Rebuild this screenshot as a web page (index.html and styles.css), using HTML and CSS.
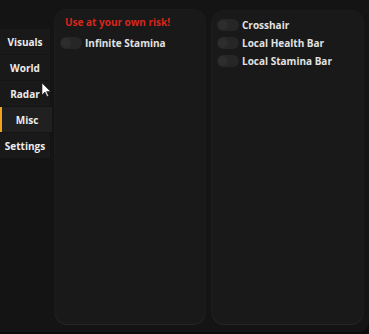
FILE: index.html
```html
<!DOCTYPE html>
<html>
<head>
<meta charset="utf-8">
<link rel="stylesheet" href="styles.css">
</head>
<body>
<div class="window">
  <nav class="sidebar">
    <div class="tab">Visuals</div>
    <div class="tab">World</div>
    <div class="tab">Radar</div>
    <div class="tab active">Misc</div>
    <div class="tab">Settings</div>
  </nav>
  <section class="panel panel-left">
    <div class="warning">Use at your own risk!</div>
    <div class="row"><span class="toggle"><span class="knob"></span></span><span class="label">Infinite Stamina</span></div>
  </section>
  <section class="panel panel-right">
    <div class="row"><span class="toggle"><span class="knob"></span></span><span class="label">Crosshair</span></div>
    <div class="row"><span class="toggle"><span class="knob"></span></span><span class="label">Local Health Bar</span></div>
    <div class="row"><span class="toggle"><span class="knob"></span></span><span class="label">Local Stamina Bar</span></div>
  </section>
  <svg class="cursor" width="10" height="15" viewBox="0 0 10 15"><path d="M1 1 L1 13 L4 10 L6 14.5 L7.5 13.8 L5.6 9.6 L9.5 9.5 Z" fill="#ffffff" stroke="#222" stroke-width="0.6"/></svg>
</div>
</body>
</html>
```
FILE: styles.css
```css
html, body {
  margin: 0;
  padding: 0;
  background: #0c0c0c;
}
body {
  width: 369px;
  height: 334px;
  overflow: hidden;
  font-family: "Open Sans", "DejaVu Sans", sans-serif;
  font-weight: 700;
  font-size: 10px;
  color: #e6e6e6;
}
.window {
  position: relative;
  display: flex;
  width: 369px;
  height: 332px;
  box-sizing: border-box;
  padding: 10px 6px 8px 0;
  background: #141414;
  border-bottom-right-radius: 10px;
}
.sidebar {
  width: 52px;
  flex: none;
  display: flex;
  flex-direction: column;
  gap: 1px;
  padding-top: 19px;
  margin-right: 3px;
}
.tab {
  height: 25px;
  width: 50px;
  display: flex;
  align-items: center;
  justify-content: center;
  background: #191919;
  color: #ececec;
  box-sizing: border-box;
}
.tab.active {
  width: 52px;
  background: #202020;
  border-left: 2px solid #f2a31e;
}
.panel {
  background: #191919;
  border-radius: 12px;
  box-shadow: 0 1px 0 #262626, 0 0 0 1px #1c1c1c;
  box-sizing: border-box;
  display: flex;
  flex-direction: column;
  gap: 6px;
  padding-left: 5px;
}
.panel-left {
  width: 150px;
  height: 314px;
  padding-top: 6px;
  margin-right: 7px;
}
.panel-right {
  width: 151px;
  height: 313px;
  margin-top: 1px;
  padding-top: 8px;
}
.warning {
  color: #d6261c;
  line-height: 12px;
  padding-left: 5px;
  margin-bottom: 3px;
}
.row {
  display: flex;
  align-items: center;
  height: 12px;
  gap: 3px;
}
.toggle {
  width: 22px;
  height: 12px;
  border-radius: 6px;
  background: #262626;
  display: flex;
  align-items: center;
  padding-left: 1px;
  box-sizing: border-box;
}
.knob {
  width: 10px;
  height: 10px;
  border-radius: 50%;
  background: #2d2d2d;
}
.label {
  color: #e2e2e2;
  line-height: 12px;
}
.cursor {
  position: absolute;
  left: 41px;
  top: 82px;
}
```
